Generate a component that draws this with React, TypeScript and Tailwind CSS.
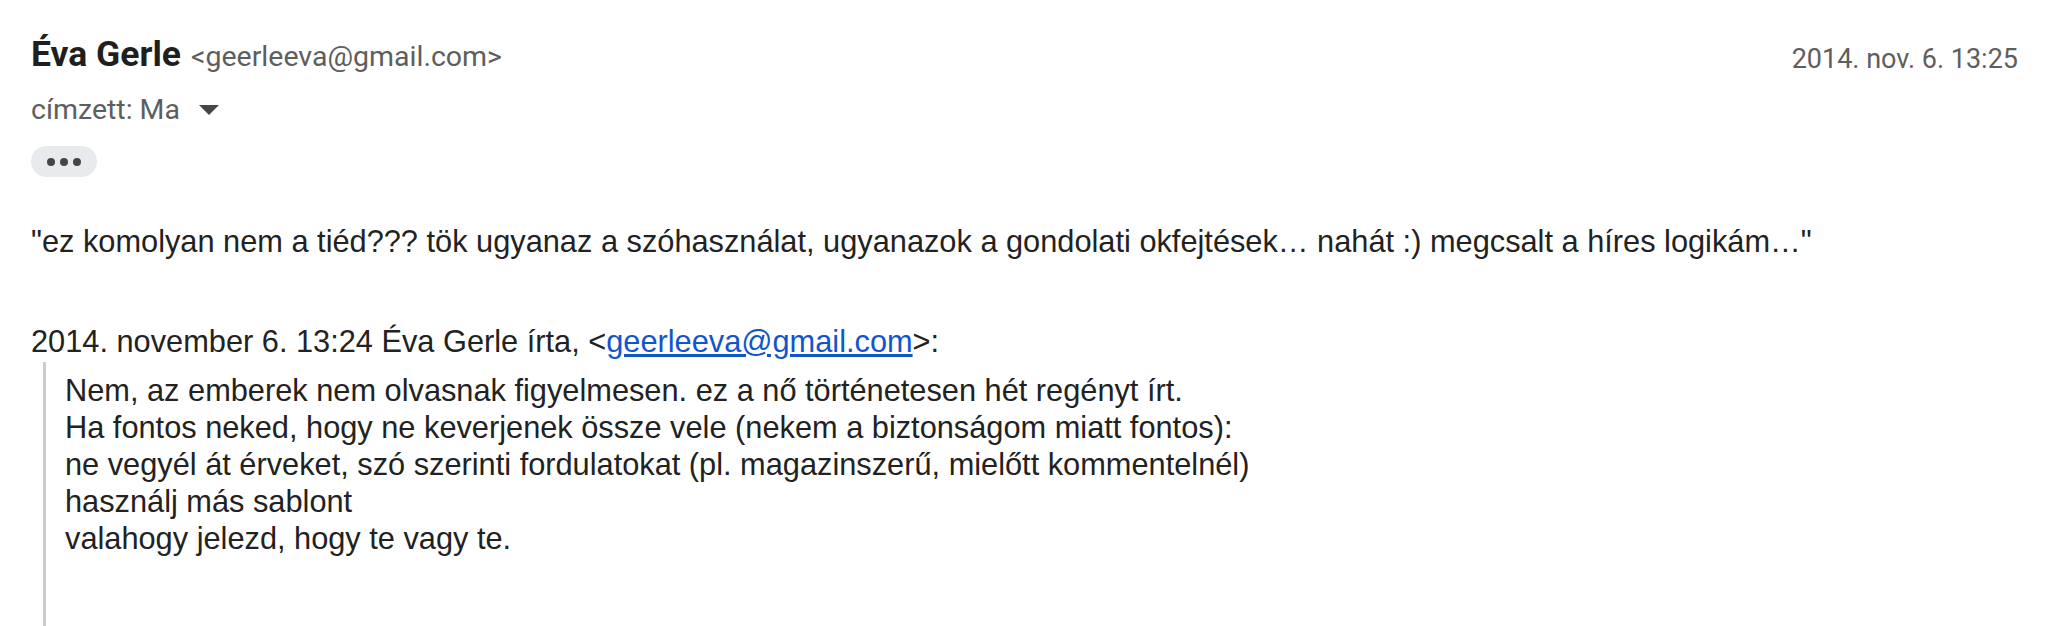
export default function App() {
  const quoted = [
    "Nem, az emberek nem olvasnak figyelmesen. ez a nő történetesen hét regényt írt.",
    "Ha fontos neked, hogy ne keverjenek össze vele (nekem a biztonságom miatt fontos):",
    "ne vegyél át érveket, szó szerinti fordulatokat (pl. magazinszerű, mielőtt kommentelnél)",
    "használj más sablont",
    "valahogy jelezd, hogy te vagy te.",
  ];

  return (
    <main className="min-h-screen bg-white overflow-hidden">
      <div className="pl-[31px] pr-[32px] pt-[34px]">
        {/* Header */}
        <div className="flex items-start justify-between">
          <div className="flex items-baseline leading-[40px] font-['Roboto',sans-serif]">
            <span className="text-[35.5px] font-bold text-[#1f1f1f]">Éva Gerle</span>
            <span className="ml-[10px] text-[28.5px] text-[#5e5e5e]">&lt;geerleeva@gmail.com&gt;</span>
          </div>
          <div className="mt-[5px] leading-[40px] text-[27px] text-[#5e5e5e] font-['Roboto',sans-serif]">
            2014. nov. 6. 13:25
          </div>
        </div>

        <div className="mt-[15px] flex items-center leading-[32px] text-[28.5px] text-[#5e5e5e] font-['Roboto',sans-serif]">
          <span>címzett: Ma</span>
          <svg className="ml-[18px]" width="22" height="10" viewBox="0 0 22 10">
            <path d="M1 0 L21 0 L11 10 Z" fill="#444746" />
          </svg>
        </div>

        <div className="mt-[20px] flex h-[31px] w-[66px] items-center justify-center gap-[5px] rounded-full bg-[#e8eaed]">
          <span className="h-[8px] w-[8px] rounded-full bg-[#444746]" />
          <span className="h-[8px] w-[8px] rounded-full bg-[#444746]" />
          <span className="h-[8px] w-[8px] rounded-full bg-[#444746]" />
        </div>

        {/* Body */}
        <div className="font-['Liberation_Sans',Arial,sans-serif] text-[30.75px] leading-[37px] text-[#222222]">
          <div className="mt-[46px]">
            "ez komolyan nem a tiéd??? tök ugyanaz a szóhasználat, ugyanazok a gondolati okfejtések… nahát :) megcsalt a híres logikám…"
          </div>

          <div className="mt-[63px]">
            2014. november 6. 13:24 Éva Gerle írta, &lt;
            <a className="text-[#1155cc] underline" href="#">
              geerleeva@gmail.com
            </a>
            &gt;:
          </div>

          <blockquote className="ml-[12px] mt-[2px] border-l-[3px] border-[#cccccc] pl-[19px] pt-[10px] pb-[80px]">
            {quoted.map((line) => (
              <div key={line}>{line}</div>
            ))}
          </blockquote>
        </div>
      </div>
    </main>
  );
}
